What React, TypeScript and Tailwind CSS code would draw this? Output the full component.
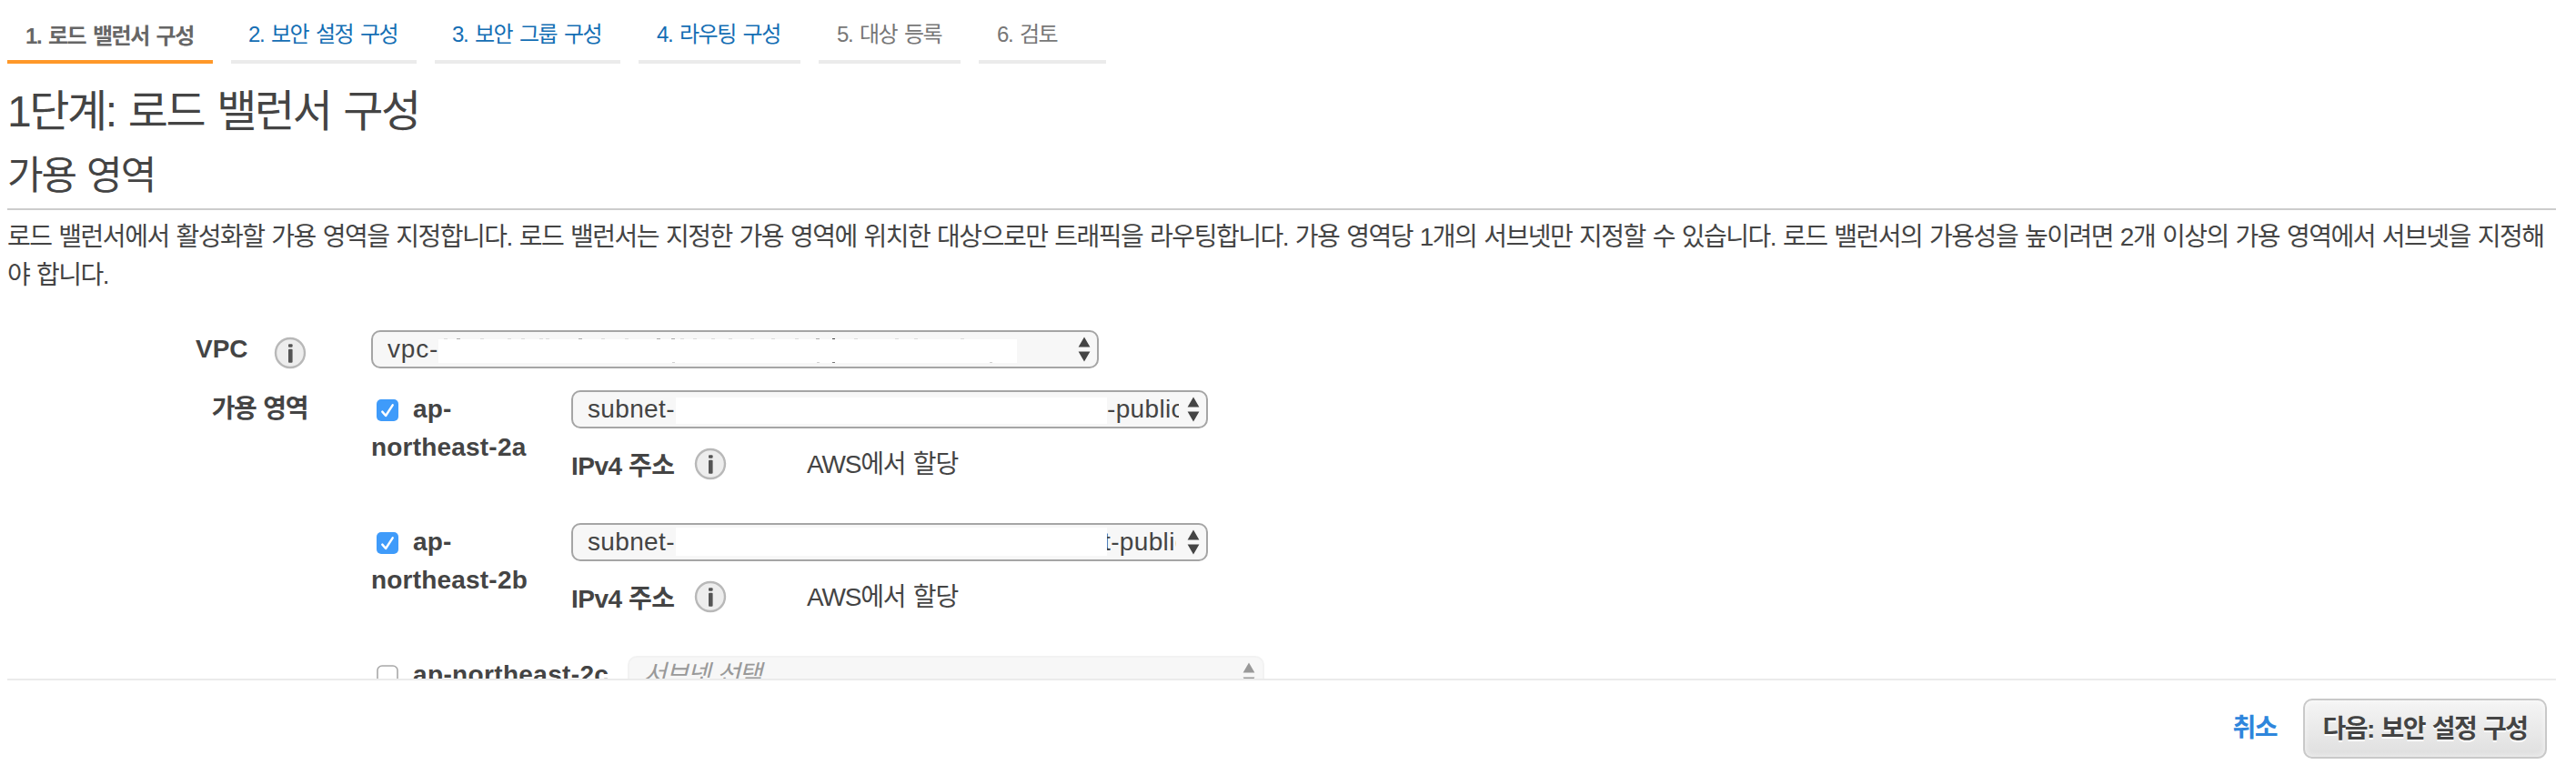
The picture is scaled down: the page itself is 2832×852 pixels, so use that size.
import type { ReactNode } from "react";

const FONT = "font-['Liberation_Sans','Noto_Sans_CJK_KR',sans-serif]";

function Tab({ label, box, tone, bar }: { label: string; box: string; tone: string; bar: string }) {
  return (
    <li className={`${box} ${tone} ${bar} h-[70px] shrink-0 whitespace-nowrap border-b-4 leading-[40px]`}>
      {label}
    </li>
  );
}

function InfoIcon() {
  return (
    <svg className="size-9 shrink-0" viewBox="0 0 36 36">
      <circle cx="18" cy="18" r="16" fill="#ededed" stroke="#b8b8b8" strokeWidth="2.4" />
      <rect x="16" y="8.2" width="4.6" height="3.6" rx="1" fill="#555" />
      <rect x="16" y="13.8" width="4.6" height="15" rx="1" fill="#555" />
    </svg>
  );
}

function Arrows({ color }: { color: string }) {
  return (
    <svg className="h-[28px] w-[14px] shrink-0" viewBox="0 0 14 28">
      <path d="M7 0.5 L13.4 11.500 H0.6 Z M7 27.500 L13.4 16.500 H0.6 Z" fill={color} />
    </svg>
  );
}

function Check({ checked }: { checked: boolean }) {
  return checked ? (
    <svg className="mt-[2px] size-6 shrink-0" viewBox="0 0 24 24">
      <rect width="24" height="24" rx="5" fill="#3f9bfa" />
      <path d="M6.3 13.6 L10.1 18 L17.700 6.300" fill="none" stroke="#fff" strokeWidth="2.4" strokeLinecap="round" strokeLinejoin="round" />
    </svg>
  ) : (
    <svg className="mt-[2px] size-6 shrink-0" viewBox="0 0 24 24">
      <rect x="1" y="1" width="22" height="22" rx="5" fill="#fff" stroke="#a8a8a8" strokeWidth="1.6" />
    </svg>
  );
}

const TOP_SPECKS = [8, 22, 48, 78, 93, 113, 120, 156, 181, 207, 242, 258, 268, 282, 302, 321, 345, 368, 394, 417, 459, 504, 525, 576];
const BOTTOM_SPECKS = [258, 417, 434, 607];

function RedactedVpc() {
  return (
    <svg className="mt-[3px] h-[28px] w-[636px] shrink-0" viewBox="0 0 636 28">
      <rect y="1" width="636" height="26" fill="#fff" />
      {TOP_SPECKS.map((x) => (
        <rect key={x} x={x - 2} y="0" width="4" height="1" fill={x === 22 || x === 156 || x === 242 || x === 258 || x === 417 ? "#aaa" : "#d9d9d9"} />
      ))}
      <rect x="433" y="-1" width="3" height="2" fill="#444" />
      {BOTTOM_SPECKS.map((x) => (
        <rect key={x} x={x - 1} y="26" width="3" height="1" fill={x === 434 ? "#777" : "#d0d0d0"} />
      ))}
    </svg>
  );
}

function Select({ width, children, arrow = "#444" }: { width: string; children: ReactNode; arrow?: string }) {
  return (
    <div className={`${width} flex h-[42px] shrink-0 items-center rounded-[10px] border-2 border-[#a5a5a5] bg-[#f7f7f7] pl-4 pr-[7px]`}>
      <div className="flex h-full min-w-0 flex-1 items-center overflow-hidden whitespace-nowrap tracking-[0.35px]">{children}</div>
      <Arrows color={arrow} />
    </div>
  );
}

function Zone({ suffix, mask, tail }: { suffix: string; mask: string; tail: ReactNode }) {
  return (
    <div className="flex h-[146px]">
      <div className="w-[220px] shrink-0 font-bold leading-[42px] tracking-[0.2px]">
        <div className="flex items-center pl-[6px]">
          <Check checked />
          <span className="ml-4">ap-</span>
        </div>
        <div>{`northeast-${suffix}`}</div>
      </div>
      <div>
        <Select width="w-[700px]">
          <span className="w-[97px] shrink-0 pb-px">subnet-</span>
          <span className={`${mask} w-[474px] shrink-0 bg-white`} />
          {tail}
        </Select>
        <div className="mt-[21px] flex h-9 items-center">
          <span className="w-[135px] whitespace-nowrap pt-[5px] font-bold tracking-[-0.5px]">IPv4 주소</span>
          <InfoIcon />
          <span className="ml-[88px] whitespace-nowrap pt-px tracking-[-1.2px] [word-spacing:2px]">AWS에서 할당</span>
        </div>
      </div>
    </div>
  );
}

export default function App() {
  return (
    <div className={`${FONT} flex h-[852px] w-[2832px] flex-col overflow-hidden bg-white pl-2 pr-[22px] text-[28px] leading-[42px] text-[#444]`}>
      <ul className="flex h-[70px] shrink-0 gap-5 text-[24px] tracking-[-1.4px] [word-spacing:2.4px]">
        <Tab label="1. 로드 밸런서 구성" box="w-[226px]" tone="font-bold text-[#666] pl-5 pt-[20px]" bar="border-[#ff9829]" />
        <Tab label="2. 보안 설정 구성" box="w-[204px]" tone="text-[#146eb4] pl-[19px] pt-[18px]" bar="border-[#ebebeb]" />
        <Tab label="3. 보안 그룹 구성" box="w-[204px]" tone="text-[#146eb4] pl-[19px] pt-[18px]" bar="border-[#ebebeb]" />
        <Tab label="4. 라우팅 구성" box="w-[178px]" tone="text-[#146eb4] pl-5 pt-[18px]" bar="border-[#ebebeb]" />
        <Tab label="5. 대상 등록" box="w-[156px]" tone="text-[#777] pl-5 pt-[18px]" bar="border-[#ebebeb]" />
        <Tab label="6. 검토" box="w-[140px]" tone="text-[#777] pl-5 pt-[18px]" bar="border-[#ebebeb]" />
      </ul>
      <h1 className="mt-[23px] h-[60px] shrink-0 whitespace-nowrap text-[48px] leading-[60px] tracking-[-2.4px] [word-spacing:3px]">1단계: 로드 밸런서 구성</h1>
      <h2 className="mt-[10px] h-[68px] shrink-0 whitespace-nowrap border-b-2 border-[#ccc] text-[43px] leading-[60px] tracking-[-2px] [word-spacing:2px]">가용 영역</h2>
      <div className="mt-[9px] h-[84px] shrink-0 whitespace-nowrap tracking-[-1.5px] [word-spacing:1.55px]">
        <p>로드 밸런서에서 활성화할 가용 영역을 지정합니다. 로드 밸런서는 지정한 가용 영역에 위치한 대상으로만 트래픽을 라우팅합니다. 가용 영역당 1개의 서브넷만 지정할 수 있습니다. 로드 밸런서의 가용성을 높이려면 2개 이상의 가용 영역에서 서브넷을 지정해</p>
        <p>야 합니다.</p>
      </div>
      <div className="mt-[39px] flex h-[66px] shrink-0">
        <div className="flex h-[42px] w-[400px] items-center pl-[207px] font-bold">
          <span className="w-[86px]">VPC</span>
          <div className="pt-2">
            <InfoIcon />
          </div>
        </div>
        <Select width="w-[800px]">
          <span className="w-[56px] shrink-0 pb-px tracking-[0.8px]">vpc-</span>
          <RedactedVpc />
        </Select>
      </div>
      <div className="flex h-[319px] shrink-0 overflow-hidden border-b-2 border-[#ebebeb]">
        <div className="w-[400px] shrink-0 pr-[70px] text-right font-bold tracking-[-1.4px] [word-spacing:1.5px]">가용 영역</div>
        <div>
          <Zone suffix="2a" mask="h-[29px] mt-[2px]" tail={<span className="w-[79px] shrink-0 overflow-hidden pb-px">-public</span>} />
          <Zone
            suffix="2b"
            mask="h-[31px] mb-[2px]"
            tail={
              <span className="w-[76px] shrink-0 overflow-hidden pb-px">
                <span className="-ml-[4px]">t-public</span>
              </span>
            }
          />
          <div className="flex items-center pl-[6px]">
            <Check checked={false} />
            <span className="ml-4 w-[236px] whitespace-nowrap font-bold tracking-[0.35px]">ap-northeast-2c</span>
            <div className="flex h-[42px] w-[700px] items-center justify-between rounded-[10px] border-2 border-[#f2f2f2] bg-[#f7f7f7] pl-[15px] pr-2 italic text-[#999]">
              <span className="tracking-[-1.5px] [word-spacing:2px]">서브넷 선택</span>
              <Arrows color="#999" />
            </div>
          </div>
        </div>
      </div>
      <div className="mt-5 flex h-[66px] shrink-0 items-center justify-end pr-[10px] font-bold tracking-[-1.5px]">
        <a className="mr-[29px] text-[#2e86dc]">취소</a>
        <button className="h-[66px] w-[268px] whitespace-nowrap rounded-[10px] border-2 border-[#c9c9c9] bg-linear-to-b from-[#f5f5f5] to-[#dfdfdf] pt-[2px] font-bold tracking-[-1.5px] shadow-[inset_0_0_6px_#ffffffb0] [text-shadow:0_2px_0_#fff] [word-spacing:1.4px]">
          다음: 보안 설정 구성
        </button>
      </div>
    </div>
  );
}
